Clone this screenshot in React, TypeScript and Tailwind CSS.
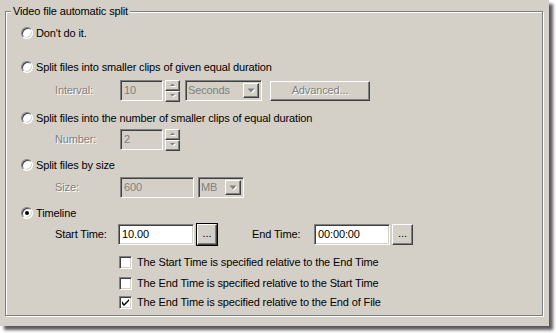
import React from "react";

const dis = "text-[#808080] [text-shadow:1px_1px_0_#fff]";
const sunken =
  "border border-t-[#808080] border-l-[#808080] border-r-white border-b-white shadow-[inset_1px_1px_0_#404040,inset_-1px_-1px_0_#d4d0c8]";
const raised =
  "border border-t-white border-l-white border-r-[#404040] border-b-[#404040] shadow-[inset_-1px_-1px_0_#808080] bg-[#d4d0c8]";

function Radio({ checked }: { checked?: boolean }) {
  return (
    <div className="w-[12px] h-[12px] rounded-full border border-t-[#808080] border-l-[#808080] border-r-white border-b-white bg-white shadow-[inset_1px_1px_0_#404040,inset_-1px_-1px_0_#d4d0c8] flex items-center justify-center shrink-0">
      {checked && <div className="w-[4px] h-[4px] rounded-full bg-black" />}
    </div>
  );
}

function RadioRow({ label, checked, mt }: { label: string; checked?: boolean; mt: string }) {
  return (
    <div className={`flex items-center h-[16px] ml-[15px] gap-[3px] ${mt}`}>
      <Radio checked={checked} />
      <span>{label}</span>
    </div>
  );
}

function Arrow({ dir, disabled }: { dir: "up" | "down"; disabled?: boolean }) {
  const pts = dir === "up" ? "0,3 5,3 2.5,0.5" : "0,0 5,0 2.5,2.5";
  return (
    <svg width="6" height="4" viewBox="0 0 6 4" className="overflow-visible">
      {disabled && <polygon points={pts} fill="#fff" transform="translate(1,1)" />}
      <polygon points={pts} fill={disabled ? "#808080" : "#000"} />
    </svg>
  );
}

function Spinner() {
  return (
    <div className="flex flex-col w-[15px] h-[22px] ml-[2px]">
      <div className={`${raised} h-[11px] flex items-center justify-center`}>
        <Arrow dir="up" disabled />
      </div>
      <div className={`${raised} h-[11px] flex items-center justify-center`}>
        <Arrow dir="down" disabled />
      </div>
    </div>
  );
}

function DisInput({ value, w }: { value: string; w: string }) {
  return (
    <div className={`${sunken} ${w} h-[21px] bg-[#d4d0c8] flex items-center pl-[3px] text-[#808080]`}>
      {value}
    </div>
  );
}

function DisSelect({ value, w, ml }: { value: string; w: string; ml: string }) {
  return (
    <div className={`${sunken} ${w} ${ml} h-[21px] bg-[#d4d0c8] flex items-center pl-[2px] pr-[2px] text-[#808080]`}>
      <span className="flex-1">{value}</span>
      <div className={`${raised} w-[16px] h-[15px] flex items-center justify-center`}>
        <svg width="8" height="5" viewBox="0 0 8 5" className="overflow-visible">
          <polygon points="0.5,0.5 7.5,0.5 4,4.5" fill="#fff" transform="translate(1,1)" />
          <polygon points="0.5,0.5 7.5,0.5 4,4.5" fill="#808080" />
        </svg>
      </div>
    </div>
  );
}

function Check({ checked }: { checked?: boolean }) {
  return (
    <div className={`${sunken} w-[13px] h-[13px] bg-white shrink-0 flex items-center justify-center`}>
      {checked && (
        <svg width="7" height="7" viewBox="0 0 7 7">
          <path d="M0 2 L0 5 L2 7 L7 2 L7 0 L2 5 Z" fill="#000" />
        </svg>
      )}
    </div>
  );
}

function CheckRow({ label, checked, mt }: { label: string; checked?: boolean; mt: string }) {
  return (
    <div className={`flex items-center h-[16px] ml-[113px] gap-[5px] ${mt}`}>
      <Check checked={checked} />
      <span>{label}</span>
    </div>
  );
}

export default function App() {
  return (
    <div
      className="w-[556px] h-[333px] bg-white text-[11px] leading-[13px] tracking-[-0.13px] text-black"
      style={{ fontFamily: '"Liberation Sans", Arial, sans-serif' }}
    >
      <div className="w-[549px] h-[326px] bg-[#d4d0c8] shadow-[4px_4px_3px_rgba(0,0,0,0.65)] pl-[5px] pt-[11px]">
        <div className="relative w-[538px] h-[305px] border border-[#808080] shadow-[inset_1px_1px_0_#fff,1px_1px_0_#fff] flex flex-col">
          <div className="absolute left-[5px] top-[-7px] px-[2px] bg-[#d4d0c8]">Video file automatic split</div>

          <RadioRow label="Don't do it." mt="mt-[13px]" />
          <RadioRow label="Split files into smaller clips of given equal duration" mt="mt-[18px]" />
          <div className="flex items-center h-[21px] ml-[49px] mt-[5px]">
            <span className={`w-[65px] ${dis}`}>Interval:</span>
            <DisInput value="10" w="w-[43px]" />
            <Spinner />
            <DisSelect value="Seconds" w="w-[77px]" ml="ml-[5px]" />
            <div className={`${raised} w-[100px] h-[20px] ml-[8px] flex items-center justify-center ${dis}`}>
              Advanced...
            </div>
          </div>
          <RadioRow label="Split files into the number of smaller clips of equal duration" mt="mt-[9px]" />
          <div className="flex items-center h-[21px] ml-[49px] mt-[3px]">
            <span className={`w-[65px] ${dis}`}>Number:</span>
            <DisInput value="2" w="w-[43px]" />
            <Spinner />
          </div>
          <RadioRow label="Split files by size" mt="mt-[7px]" />
          <div className="flex items-center h-[21px] ml-[49px] mt-[4px]">
            <span className={`w-[65px] ${dis}`}>Size:</span>
            <DisInput value="600" w="w-[74px]" />
            <DisSelect value="MB" w="w-[46px]" ml="ml-[4px]" />
          </div>
          <RadioRow label="Timeline" checked mt="mt-[7px]" />
          <div className="flex items-center h-[23px] ml-[49px] mt-[2px]">
            <span className="w-[63px]">Start Time:</span>
            <div className={`${sunken} w-[76px] h-[21px] bg-white flex items-center pl-[3px]`}>10.00</div>
            <div className="ml-[2px] w-[22px] h-[23px] border border-black">
              <div className={`${raised} w-full h-full flex items-center justify-center pb-[2px]`}>...</div>
            </div>
            <span className="ml-[34px] w-[62px]">End Time:</span>
            <div className={`${sunken} w-[76px] h-[21px] bg-white flex items-center pl-[3px]`}>00:00:00</div>
            <div className={`${raised} ml-[2px] w-[21px] h-[21px] flex items-center justify-center pb-[2px]`}>...</div>
          </div>
          <CheckRow label="The Start Time is specified relative to the End Time" mt="mt-[8px]" />
          <CheckRow label="The End Time is specified relative to the Start Time" mt="mt-[5px]" />
          <CheckRow label="The End Time is specified relative to the End of File" checked mt="mt-[3px]" />
        </div>
      </div>
    </div>
  );
}
